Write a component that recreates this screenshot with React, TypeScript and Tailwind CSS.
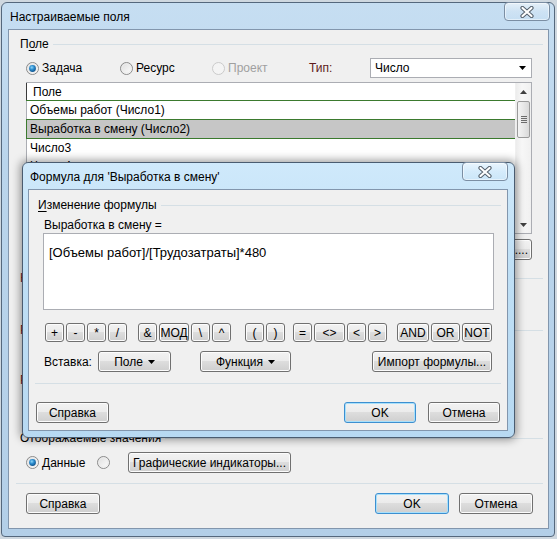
import React from "react";

function Btn({
  children,
  className = "",
  primary = false,
}: {
  children?: React.ReactNode;
  className?: string;
  primary?: boolean;
}) {
  return (
    <div
      className={`flex items-center justify-center rounded-[3px] border text-[12px] leading-none text-black bg-[linear-gradient(to_bottom,#f2f2f2_0%,#ebebeb_49%,#dddddd_50%,#cfcfcf_100%)] ${
        primary
          ? "border-[#3c8fd0] shadow-[inset_0_0_0_1px_#a8e0fb]"
          : "border-[#707070] shadow-[inset_0_0_0_1px_#fcfcfc]"
      } ${className}`}
    >
      {children}
    </div>
  );
}

function Radio({ checked = false, disabled = false }: { checked?: boolean; disabled?: boolean }) {
  return (
    <svg width="13" height="13" viewBox="0 0 13 13" className="shrink-0">
      <defs>
        <linearGradient id="rbg" x1="0" y1="0" x2="1" y2="1">
          <stop offset="0" stopColor="#dcdcdc" />
          <stop offset="1" stopColor="#ffffff" />
        </linearGradient>
        <radialGradient id="rdot" cx="0.4" cy="0.35" r="0.7">
          <stop offset="0" stopColor="#8fd6f7" />
          <stop offset="0.45" stopColor="#2d8ed0" />
          <stop offset="1" stopColor="#0c4d86" />
        </radialGradient>
      </defs>
      <circle
        cx="6.5"
        cy="6.5"
        r="6"
        fill={disabled ? "#f4f4f4" : "url(#rbg)"}
        stroke={disabled ? "#cacaca" : "#8a8a8a"}
      />
      {!disabled && <circle cx="6.5" cy="6.5" r="4.6" fill="none" stroke="#ececec" strokeWidth="1" />}
      {checked && <circle cx="6.5" cy="6.5" r="3.4" fill="url(#rdot)" />}
    </svg>
  );
}

function CloseBtn({ className = "" }: { className?: string }) {
  return (
    <div
      className={`flex items-center justify-center rounded-[4px] border border-[#7b8ea3] bg-[linear-gradient(to_bottom,rgba(255,255,255,0.55),rgba(255,255,255,0.15)_50%,rgba(200,225,245,0.3))] shadow-[inset_0_0_0_1px_rgba(255,255,255,0.5)] ${className}`}
    >
      <svg width="14" height="12" viewBox="0 0 14 12">
        <path d="M2.5 2 L11.5 10 M11.5 2 L2.5 10" stroke="#55606c" strokeWidth="4.2" strokeLinecap="round" />
        <path d="M2.5 2 L11.5 10 M11.5 2 L2.5 10" stroke="#ffffff" strokeWidth="2.2" strokeLinecap="round" />
      </svg>
    </div>
  );
}

function Caret({ color = "#000" }: { color?: string }) {
  return (
    <svg width="7" height="4" viewBox="0 0 7 4" className="shrink-0">
      <path d="M0 0 L7 0 L3.5 4 Z" fill={color} />
    </svg>
  );
}

function GroupLabel({
  children,
  className = "",
  line = true,
  textClass = "text-black",
}: {
  children: React.ReactNode;
  className?: string;
  line?: boolean;
  textClass?: string;
}) {
  return (
    <div className={`flex h-[14px] items-center ${className}`}>
      <span className={`whitespace-nowrap text-[12px] leading-none ${textClass}`}>{children}</span>
      {line && <div className="ml-[4px] h-px flex-1 bg-[#d5dfe5]" />}
    </div>
  );
}

/* Group label of the main dialog that lies under the formula window: only its first sliver shows. */
function CoveredLabel({ letter, className = "", line = true }: { letter: string; className?: string; line?: boolean }) {
  return (
    <div className={`flex h-[14px] items-center ${className}`}>
      <span className="w-[3px] overflow-hidden whitespace-nowrap text-[12px] leading-none text-[#6a1b1b]">{letter}</span>
      <div className="flex-1" />
      {line && <div className="h-px w-[300px] bg-[#d5dfe5]" />}
    </div>
  );
}

function Scrollbar() {
  return (
    <div className="flex w-[16px] flex-col border-l border-[#f0f0f0] bg-[linear-gradient(to_right,#ececec,#f7f7f7_40%,#f0f0f0)]">
      <div className="flex h-[17px] items-center justify-center">
        <svg width="7" height="4" viewBox="0 0 7 4">
          <path d="M0 4 L7 4 L3.5 0 Z" fill="#404040" />
        </svg>
      </div>
      <div className="mx-[1px] mt-[1px] flex h-[37px] flex-col items-center justify-center gap-[1px] rounded-[2px] border border-[#9a9a9a] bg-[linear-gradient(to_right,#f4f4f4,#e8e8e8_50%,#d9d9d9)]">
        <div className="h-px w-[6px] bg-[#6c6c6c]" />
        <div className="h-px w-[6px] bg-[#6c6c6c]" />
        <div className="h-px w-[6px] bg-[#6c6c6c]" />
        <div className="h-px w-[6px] bg-[#6c6c6c]" />
      </div>
      <div className="flex-1" />
      <div className="flex h-[17px] items-center justify-center">
        <Caret color="#404040" />
      </div>
    </div>
  );
}

function OpBtn({ children, w = "w-[19px]", ml }: { children: React.ReactNode; w?: string; ml: string }) {
  return (
    <Btn className={`h-[19px] ${w} ${ml} text-[11px]`}>
      <span className="pt-[1px]">{children}</span>
    </Btn>
  );
}

function FormulaDialog() {
  return (
    <div className="absolute left-[22px] top-[162px] flex h-[276px] w-[493px] flex-col rounded-[6px] border border-[#4a5c70] bg-[linear-gradient(to_bottom,#cfe9fb,#bfdff5_40%,#b7d9f2)] shadow-[0_0_9px_2px_rgba(0,0,0,0.38)]">
      <div className="flex h-[26px] items-start justify-between">
        <span className="pl-[7px] pt-[8px] text-[12px] leading-none text-black">
          Формула для 'Выработка в смену'
        </span>
        <CloseBtn className="mr-[6px] mt-[-1px] h-[19px] w-[46px]" />
      </div>
      <div className="mb-[6px] ml-[5px] mr-[6px] flex flex-1 flex-col border border-[#8296ad] bg-[#f0f0f0]">
        <GroupLabel className="ml-[9px] mr-[6px] mt-[8px]">
          <span className="underline decoration-1 underline-offset-2">И</span>зменение формулы
        </GroupLabel>
        <div className="ml-[15px] mt-[6px] flex h-[14px] items-center text-[12px] leading-none text-black">
          Выработка в смену =
        </div>
        <div className="ml-[14px] mt-[1px] h-[77px] w-[451px] border border-[#abadb3] bg-white pl-[5px] pt-[12px] text-[13px] leading-none text-black">
          [Объемы работ]/[Трудозатраты]*480
        </div>
        <div className="mt-[13px] flex h-[19px]">
          <OpBtn ml="ml-[16px]">+</OpBtn>
          <OpBtn ml="ml-[2px]">-</OpBtn>
          <OpBtn ml="ml-[2px]">*</OpBtn>
          <OpBtn ml="ml-[2px]">/</OpBtn>
          <OpBtn ml="ml-[11px]">&amp;</OpBtn>
          <OpBtn ml="ml-[2px]" w="w-[30px]">МОД</OpBtn>
          <OpBtn ml="ml-[2px]">\</OpBtn>
          <OpBtn ml="ml-[2px]">^</OpBtn>
          <OpBtn ml="ml-[14px]">(</OpBtn>
          <OpBtn ml="ml-[2px]">)</OpBtn>
          <OpBtn ml="ml-[8px]">=</OpBtn>
          <OpBtn ml="ml-[2px]" w="w-[31px]">&lt;&gt;</OpBtn>
          <OpBtn ml="ml-[2px]">&lt;</OpBtn>
          <OpBtn ml="ml-[2px]">&gt;</OpBtn>
          <OpBtn ml="ml-[10px]" w="w-[32px]">AND</OpBtn>
          <OpBtn ml="ml-[2px]" w="w-[29px]">OR</OpBtn>
          <OpBtn ml="ml-[2px]" w="w-[30px]">NOT</OpBtn>
        </div>
        <div className="mt-[9px] flex h-[21px] items-center">
          <span className="ml-[15px] w-[54px] text-[12px] leading-none text-black">Вставка:</span>
          <Btn className="h-[21px] w-[73px] gap-[5px]">
            <span>Поле</span>
            <Caret />
          </Btn>
          <Btn className="ml-[29px] h-[21px] w-[91px] gap-[5px]">
            <span>Функция</span>
            <Caret />
          </Btn>
          <Btn className="ml-auto mr-[15px] h-[21px] w-[120px]">Импорт формулы...</Btn>
        </div>
        <div className="mx-[6px] mt-[11px] h-px bg-[#d5dfe5]" />
        <div className="mt-[18px] flex h-[21px]">
          <Btn className="ml-[7px] h-[21px] w-[73px]">Справка</Btn>
          <Btn primary className="ml-auto h-[21px] w-[72px]">
            OK
          </Btn>
          <Btn className="ml-[12px] mr-[7px] h-[21px] w-[72px]">Отмена</Btn>
        </div>
      </div>
    </div>
  );
}

export default function App() {
  return (
    <div className="relative h-[539px] w-[557px] overflow-hidden bg-[#cfd8e0] pl-[1px] pt-[2px] font-['Liberation_Sans',Arial,sans-serif]">
      <div className="flex h-[535px] w-[554px] flex-col rounded-t-[6px] rounded-b-[4px] border border-[#55687d] bg-[linear-gradient(to_bottom,#c6def2,#bad5ec_30%,#b3cfe8)]">
        <div className="flex h-[26px] items-start justify-between">
          <span className="pl-[8px] pt-[8px] text-[12px] leading-none text-black">Настраиваемые поля</span>
          <CloseBtn className="mr-[4px] mt-[-1px] h-[19px] w-[46px]" />
        </div>
        <div className="mb-[7px] ml-[6px] mr-[5px] flex flex-1 flex-col border border-[#8296ad] bg-[#f0f0f0] text-[12px] text-black">
          <GroupLabel className="ml-[11px] mr-[5px] mt-[7px]">
            П<span className="underline decoration-1 underline-offset-2">о</span>ле
          </GroupLabel>
          <div className="ml-[17px] mt-[7px] flex h-[20px] items-center">
            <div className="flex w-[94px] items-center gap-[3px]">
              <Radio checked />
              <span className="leading-none">Задача</span>
            </div>
            <div className="flex w-[92px] items-center gap-[3px]">
              <Radio />
              <span className="leading-none">Ресурс</span>
            </div>
            <div className="flex w-[97px] items-center gap-[3px]">
              <Radio disabled />
              <span className="leading-none text-[#a0a0a0]">Проект</span>
            </div>
            <span className="w-[61px] leading-none text-[#5e1a1a]">Тип:</span>
            <div className="flex h-[20px] w-[162px] items-center justify-between border border-[#abadb3] bg-white pl-[4px] pr-[5px]">
              <span className="leading-none">Число</span>
              <Caret />
            </div>
          </div>
          <div className="ml-[17px] mt-[4px] flex h-[152px] w-[506px] border border-[#abadb3] bg-white">
            <div className="flex flex-1 flex-col">
              <div className="-ml-px flex h-[17px] items-center border-l border-[#3a3a3a] pl-[6px] leading-none">
                Поле
              </div>
              <div className="-ml-px flex h-[19px] items-center border-t border-[#3b7a2e] pl-[4px] leading-none">
                Объемы работ (Число1)
              </div>
              <div className="-ml-px flex h-[20px] items-center border-y border-l border-[#3b7a2e] bg-[#c6c6c6] pl-[3px] leading-none">
                Выработка в смену (Число2)
              </div>
              <div className="flex h-[18px] items-center pl-[3px] leading-none">Число3</div>
              <div className="flex h-[18px] items-center pl-[3px] leading-none">Число4</div>
            </div>
            <Scrollbar />
          </div>
          <div className="mr-[16px] mt-[5px] flex h-[21px] justify-end">
            <Btn className="h-[21px] w-[100px] justify-end pr-[3px]">....</Btn>
          </div>
          <CoveredLabel letter="Н" className="ml-[11px] mr-[5px] mt-[11px]" />
          <CoveredLabel letter="Р" className="ml-[11px] mr-[5px] mt-[38px]" />
          <CoveredLabel letter="Р" className="ml-[11px] mr-[5px] mt-[36px]" line={false} />
          <GroupLabel className="ml-[11px] mr-[5px] mt-[44px]">Отображаемые значения</GroupLabel>
          <div className="ml-[17px] mt-[7px] flex h-[21px] items-center">
            <Radio checked />
            <span className="ml-[3px] w-[55px] leading-none">Данные</span>
            <Radio />
            <Btn className="ml-[18px] h-[21px] w-[163px]">Графические индикаторы...</Btn>
          </div>
          <div className="ml-[7px] mr-[5px] mt-[10px] h-px bg-[#d5dfe5]" />
          <div className="mt-[9px] flex h-[21px]">
            <Btn className="ml-[17px] h-[21px] w-[74px]">Справка</Btn>
            <Btn primary className="ml-auto h-[21px] w-[74px]">
              OK
            </Btn>
            <Btn className="ml-[10px] mr-[15px] h-[21px] w-[74px]">Отмена</Btn>
          </div>
        </div>
      </div>
      <FormulaDialog />
    </div>
  );
}
